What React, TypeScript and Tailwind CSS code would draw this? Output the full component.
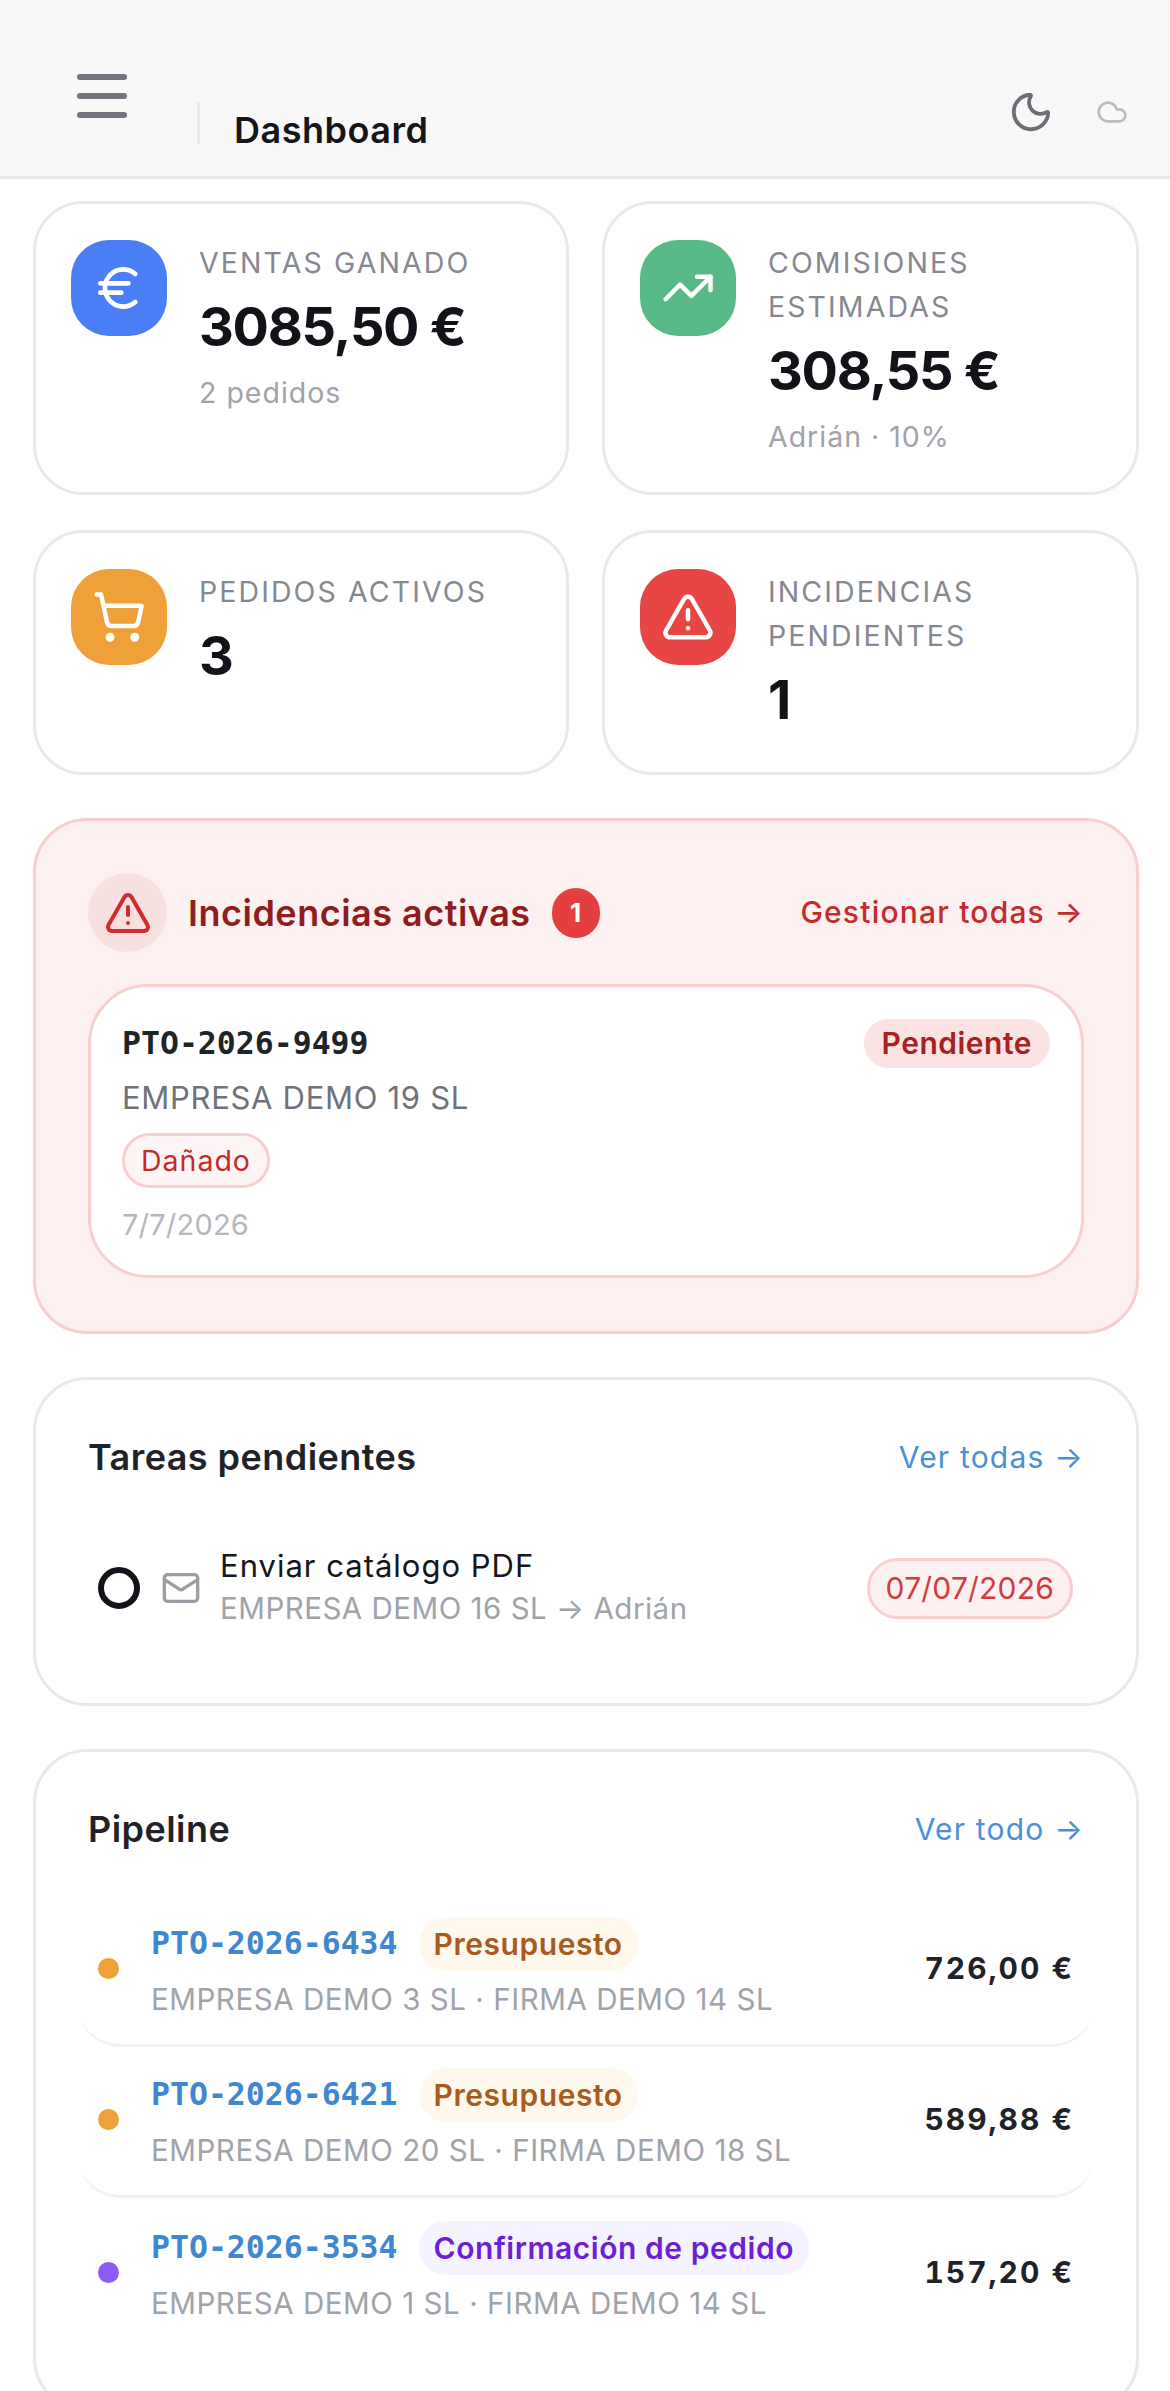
import { Cloud, Euro, Mail, Moon, ShoppingCart, TrendingUp, TriangleAlert } from "lucide-react";
import type { ReactNode } from "react";

const sans = "[font-family:Inter,'Noto_Sans',sans-serif]";
const mono = "[font-family:'DejaVu_Sans_Mono','Liberation_Mono',monospace]";

interface StatProps {
  icon: ReactNode;
  color: string;
  label: ReactNode;
  value: string;
  sub?: string;
}

const Stat = ({ icon, color, label, value, sub }: StatProps) => (
  <div className="flex gap-[32px] rounded-[50px] border-[3px] border-[#e5eaee] bg-white pt-[36px] pr-[20px] pb-[30px] pl-[35px]">
    <div className={`flex h-[96px] w-[96px] shrink-0 items-center justify-center rounded-[38px] ${color}`}>{icon}</div>
    <div className="min-w-0 pt-[1px]">
      <div className="text-[28.5px] leading-[44px] tracking-[2.1px] text-[#85888f]">{label}</div>
      <div className="text-[54px] leading-[84px] font-bold tracking-[-1.3px] text-[#111318]">{value}</div>
      {sub && <div className="mt-[2px] pb-[3px] text-[28.5px] leading-[44px] tracking-[1px] text-[#a0a3a9]">{sub}</div>}
    </div>
  </div>
);

const CardHead = ({ title, link }: { title: string; link: string }) => (
  <div className="flex items-center justify-between">
    <div className="text-[36px] leading-[50px] font-semibold tracking-[0.45px] text-[#1f2328]">{title}</div>
    <div className="text-[30px] leading-[44px] font-normal tracking-[1.2px] text-[#4a90d9]">{link} →</div>
  </div>
);

const pipeline = [
  { id: "PTO-2026-6434", tag: "Presupuesto", sub: "EMPRESA DEMO 3 SL · FIRMA DEMO 14 SL", total: "726,00 €", dot: "bg-[#f0a038]", pill: "bg-[#fef9ec] text-[#a85a20]" },
  { id: "PTO-2026-6421", tag: "Presupuesto", sub: "EMPRESA DEMO 20 SL · FIRMA DEMO 18 SL", total: "589,88 €", dot: "bg-[#f0a038]", pill: "bg-[#fef9ec] text-[#a85a20]" },
  { id: "PTO-2026-3534", tag: "Confirmación de pedido", sub: "EMPRESA DEMO 1 SL · FIRMA DEMO 14 SL", total: "157,20 €", dot: "bg-[#8b5cf6]", pill: "bg-[#f5f3ff] text-[#6d1fd6]" },
];

export default function App() {
  return (
    <div className={`h-[2391px] overflow-hidden bg-white ${sans}`}>
      <header className="flex h-[179px] items-start border-b-[3px] border-[#e5eaee] bg-[#f8f8f8] pr-[42px] pl-[77px]">
        <div className="mt-[74px] flex w-[50px] flex-col gap-[13px]">
          <div className="h-[6px] rounded-full bg-[#72757c]" />
          <div className="h-[6px] rounded-full bg-[#72757c]" />
          <div className="h-[6px] rounded-full bg-[#72757c]" />
        </div>
        <div className="mt-[102px] ml-[70px] h-[42px] w-[3px] bg-[#e6ebf2]" />
        <div className="mt-[105px] ml-[34px] text-[36px] leading-[50px] font-semibold tracking-[0.5px] text-[#14161a]">Dashboard</div>
        <div className="ml-auto flex items-center gap-[42px] pt-[89px]">
          <Moon size={46} strokeWidth={2} className="text-[#6b6e75]" />
          <Cloud size={32} strokeWidth={2} className="text-[#b8bbc1]" />
        </div>
      </header>

      <main className="flex flex-col gap-[43px] pt-[22px] pr-[31px] pl-[33px]">
        <div className="flex flex-col gap-[35px]">
          <div className="grid grid-cols-[536px_1fr] gap-[33px]">
            <Stat icon={<Euro size={56} color="white" strokeWidth={2} />} color="bg-[#4a7ef7]" label="VENTAS GANADO" value="3085,50 €" sub="2 pedidos" />
            <Stat icon={<TrendingUp size={54} color="white" strokeWidth={2} />} color="bg-[#57b985]" label={<>COMISIONES<br />ESTIMADAS</>} value="308,55 €" sub="Adrián · 10%" />
          </div>
          <div className="grid grid-cols-[536px_1fr] gap-[33px]">
            <Stat icon={<ShoppingCart size={54} color="white" strokeWidth={2} />} color="bg-[#f0a038]" label="PEDIDOS ACTIVOS" value="3" />
            <Stat icon={<TriangleAlert size={54} color="white" strokeWidth={2} />} color="bg-[#e84545]" label={<>INCIDENCIAS<br />PENDIENTES</>} value="1" />
          </div>
        </div>

        <section className="rounded-[54px] border-[3px] border-[#f7cfcf] bg-[#fcf0f0] px-[52px] pt-[52px] pb-[53px]">
          <div className="flex h-[79px] items-center">
            <div className="flex h-[79px] w-[79px] items-center justify-center rounded-full bg-[#f9e0e0]">
              <TriangleAlert size={48} strokeWidth={2} className="text-[#d02c2c]" />
            </div>
            <div className="ml-[21px] text-[36px] font-semibold tracking-[0.5px] text-[#8f1d1d]">Incidencias activas</div>
            <div className="ml-[21px] flex h-[50px] w-[48px] items-center justify-center rounded-full bg-[#e53e3e] text-[26px] font-bold text-white">1</div>
            <div className="ml-auto text-[30px] font-medium tracking-[1.2px] text-[#c42b2b]">Gestionar todas →</div>
          </div>
          <div className="mt-[32px] rounded-[60px] border-[3px] border-[#f7cfcf] bg-white pt-[32px] pr-[31px] pb-[28px] pl-[31px]">
            <div className="flex items-center justify-between">
              <div className={`text-[31.5px] font-bold text-[#1f2429] ${mono}`}>PTO-2026-9499</div>
              <div className="rounded-full bg-[#fbe3e3] px-[18px] py-[4px] text-[30px] leading-[41px] font-semibold tracking-[0.5px] text-[#a82020]">Pendiente</div>
            </div>
            <div className="mt-[8px] text-[31px] leading-[44px] tracking-[0.7px] text-[#6f7279]">EMPRESA DEMO 19 SL</div>
            <div className="mt-[13px] flex">
              <div className="rounded-full border-[3px] border-[#f7cfcf] bg-[#fdf5f5] px-[16px] text-[28.5px] leading-[49px] tracking-[1px] text-[#c42b2b]">Dañado</div>
            </div>
            <div className="mt-[15px] text-[29px] leading-[44px] tracking-[0.2px] text-[#b4b7bc]">7/7/2026</div>
          </div>
        </section>

        <section className="h-[329px] rounded-[54px] border-[3px] border-[#e5eaee] bg-white px-[52px] pt-[52px]">
          <CardHead title="Tareas pendientes" link="Ver todas" />
          <div className="mt-[63px] flex items-center pr-[11px] pl-[10px]">
            <div className="h-[42px] w-[42px] shrink-0 rounded-full border-[6px] border-[#111318]" />
            <Mail size={40} strokeWidth={2} className="ml-[21px] shrink-0 text-[#9a9da3]" />
            <div className="ml-[19px] pb-[2px]">
              <div className="text-[31px] leading-[42px] tracking-[1px] text-[#14161a]">Enviar catálogo PDF</div>
              <div className="text-[29.5px] leading-[42px] tracking-[0.5px] text-[#a0a3a9]">EMPRESA DEMO 16 SL → Adrián</div>
            </div>
            <div className="ml-auto rounded-full border-[3px] border-[#f7cfcf] bg-[#fdf0f0] px-[16px] text-[30px] leading-[55px] tracking-[0.2px] text-[#d13c3c]">07/07/2026</div>
          </div>
        </section>

        <section className="rounded-[54px] border-[3px] border-[#e5eaee] bg-white px-[42px] pt-[52px] pb-[60px]">
          <div className="px-[10px]">
            <CardHead title="Pipeline" link="Ver todo" />
          </div>
          <div className="mt-[42px]">
            {pipeline.map((p) => (
              <div key={p.id} className="flex h-[151px] items-center rounded-[42px] border-b-[3px] border-[#f0f2f5] pr-[20px] pb-[3px] pl-[20px] last:border-b-0">
                <div className={`h-[21px] w-[21px] shrink-0 rounded-full ${p.dot}`} />
                <div className="ml-[32px]">
                  <div className="flex items-center">
                    <div className={`text-[31.5px] font-bold text-[#3f87cf] ${mono}`}>{p.id}</div>
                    <div className={`ml-[21px] rounded-full px-[15px] text-[30px] leading-[54px] font-semibold tracking-[0.55px] ${p.pill}`}>{p.tag}</div>
                  </div>
                  <div className="mt-[7px] text-[29.5px] leading-[42px] tracking-[0.55px] text-[#a0a3a9]">{p.sub}</div>
                </div>
                <div className="ml-auto text-[30px] font-bold tracking-[2px] text-[#1f2328] tabular-nums">{p.total}</div>
              </div>
            ))}
          </div>
        </section>
      </main>
    </div>
  );
}
